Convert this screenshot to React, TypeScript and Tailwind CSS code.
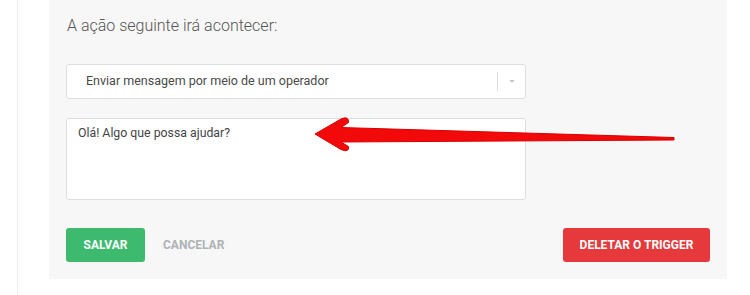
export default function App() {
  return (
    <div className="relative w-[750px] h-[295px] bg-white flex font-['Roboto',sans-serif] overflow-hidden">
      <div className="w-[18px] h-full border-r border-[#ececec] shrink-0" />
      <div className="ml-[31px] w-[678px] h-[279px] bg-[#f7f7f7] px-[17px] pt-4 flex flex-col">
        <h2 className="text-[16px] leading-5 font-light text-[#555] ml-px">A ação seguinte irá acontecer:</h2>

        {/* select */}
        <div className="mt-7 w-[460px] h-[35px] bg-white border border-[#dedede] rounded-[3px] flex items-center">
          <span className="flex-1 pl-[19px] text-[12.5px] text-[#4a4a4a]">Enviar mensagem por meio de um operador</span>
          <div className="w-px h-[19px] bg-[#dcdcdc]" />
          <div className="w-[27px] flex justify-center">
            <div className="w-0 h-0 border-l-[3px] border-r-[3px] border-t-[3px] border-l-transparent border-r-transparent border-t-[#c8c8c8]" />
          </div>
        </div>

        {/* message */}
        <div className="mt-[19px] w-[460px] h-[82px] bg-white border border-[#dedede] rounded-[3px] px-[11px] pt-[6px]">
          <p className="text-[12.3px] leading-4 text-[#444]">Olá! Algo que possa ajudar?</p>
        </div>

        {/* actions */}
        <div className="mt-[28px] flex items-center">
          <button className="w-[79px] h-[34px] bg-[#3dba6e] rounded-[3px] text-white text-[12px] font-bold">SALVAR</button>
          <button className="ml-[18px] text-[12px] font-bold text-[#aeb2b6]">CANCELAR</button>
          <button className="ml-auto w-[147px] h-[34px] bg-[#e5393b] rounded-[3px] text-white text-[12px] font-bold">DELETAR O TRIGGER</button>
        </div>
      </div>

      {/* annotation arrow */}
      <svg className="absolute left-0 top-0 pointer-events-none" width="750" height="295" viewBox="0 0 750 295">
        <path
          d="M315,134 L341,119 Q349,115.5 348.5,122.5 L341,127.5 L674,137.5 L674,140 L341,142 L348.5,146.5 Q349.5,153 341,149.5 Z"
          fill="#f20a0a"
          stroke="#d80000"
          strokeWidth="1"
          strokeLinejoin="round"
        />
      </svg>
    </div>
  );
}
